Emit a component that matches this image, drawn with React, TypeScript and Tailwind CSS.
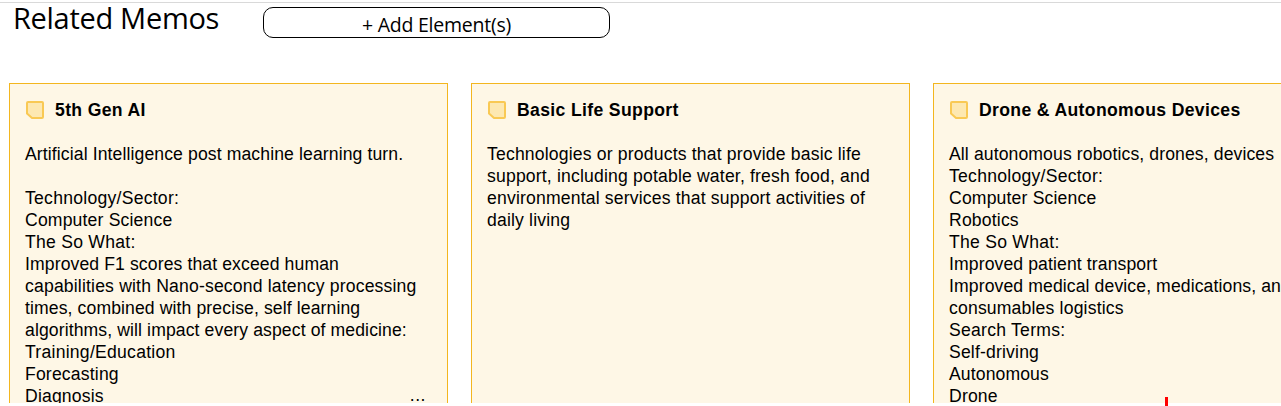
import type { FC } from "react";

interface MemoLine {
  text: string;
  spacing?: "tight" | "wide";
}

interface Memo {
  title: string;
  lines: MemoLine[];
  truncated?: boolean;
}

const memos: Memo[] = [
  {
    title: "5th Gen AI",
    lines: [
      {
        text: "Artificial Intelligence post machine learning turn.",
        spacing: "tight",
      },
      { text: "" },
      { text: "Technology/Sector:", spacing: "wide" },
      { text: "Computer Science" },
      { text: "The So What:", spacing: "wide" },
      { text: "Improved F1 scores that exceed human", spacing: "tight" },
      { text: "capabilities with Nano-second latency processing" },
      {
        text: "times, combined with precise, self learning",
        spacing: "tight",
      },
      {
        text: "algorithms, will impact every aspect of medicine:",
        spacing: "tight",
      },
      { text: "Training/Education", spacing: "wide" },
      { text: "Forecasting" },
      { text: "Diagnosis" },
    ],
    truncated: true,
  },
  {
    title: "Basic Life Support",
    lines: [
      { text: "Technologies or products that provide basic life" },
      { text: "support, including potable water, fresh food, and" },
      { text: "environmental services that support activities of" },
      { text: "daily living" },
    ],
  },
  {
    title: "Drone & Autonomous Devices",
    lines: [
      { text: "All autonomous robotics, drones, devices", spacing: "tight" },
      { text: "Technology/Sector:", spacing: "wide" },
      { text: "Computer Science" },
      { text: "Robotics" },
      { text: "The So What:", spacing: "wide" },
      { text: "Improved patient transport", spacing: "tight" },
      { text: "Improved medical device, medications, and", spacing: "tight" },
      { text: "consumables logistics" },
      { text: "Search Terms:", spacing: "wide" },
      { text: "Self-driving" },
      { text: "Autonomous", spacing: "tight" },
      { text: "Drone" },
    ],
  },
];

const spacingClass = {
  tight: "tracking-[0.11px]",
  normal: "tracking-[0.17px]",
  wide: "tracking-[0.25px]",
};

const MemoIcon: FC = () => (
  <svg className="size-[18px] shrink-0" viewBox="0 0 18 18" fill="none">
    <path
      d="M2 1H16Q17 1 17 2V16Q17 17 16 17H6L1 12.5V2Q1 1 2 1Z"
      fill="#fde8b1"
      stroke="#f9c954"
      strokeWidth="2"
      strokeLinejoin="round"
    />
  </svg>
);

const MemoCard: FC<{ memo: Memo }> = ({ memo }) => (
  <article className="relative h-[420px] w-[439px] shrink-0 border border-[#f3b61f] bg-[#fef7e6] px-[15px] pt-[15px]">
    <header className="flex h-[22px] items-center gap-[11px] pl-px">
      <MemoIcon />
      <h2 className="text-[17.6px] font-bold leading-[22px] tracking-[0.35px] whitespace-nowrap">
        {memo.title}
      </h2>
    </header>
    <div className="mt-[22px] text-[17.6px] leading-[22px] whitespace-nowrap">
      {memo.lines.map((line, i) => (
        <p
          key={i}
          className={`h-[22px] ${spacingClass[line.spacing ?? "normal"]}`}
        >
          {line.text}
        </p>
      ))}
    </div>
    {memo.truncated && (
      <span className="absolute top-[300px] right-[21px] text-[17.6px] leading-[22px] tracking-[0.5px]">
        ...
      </span>
    )}
  </article>
);

export default function App() {
  return (
    <div className="relative h-[406px] w-[1281px] overflow-hidden bg-white font-['Liberation_Sans',Arial,sans-serif] text-black">
      <div className="h-[3px] border-b border-[#d9d9d9]" />
      <div className="flex h-20 items-start pl-[13px] font-['Open_Sans',sans-serif]">
        <h1 className="-mt-px w-[250px] text-[29px] leading-8 tracking-[-0.3px] whitespace-nowrap">
          Related Memos
        </h1>
        <button className="mt-1 h-[31px] w-[347px] rounded-[10px] border border-black pt-[3px] text-[19.5px] leading-7 tracking-[-0.25px]">
          + Add Element(s)
        </button>
      </div>
      <main className="flex h-80 gap-[23px] overflow-hidden pl-[9px]">
        {memos.map((memo) => (
          <MemoCard key={memo.title} memo={memo} />
        ))}
      </main>
      <div className="absolute top-[397px] left-[1165px] h-[9px] w-[3px] bg-[#ff0000]" />
    </div>
  );
}
